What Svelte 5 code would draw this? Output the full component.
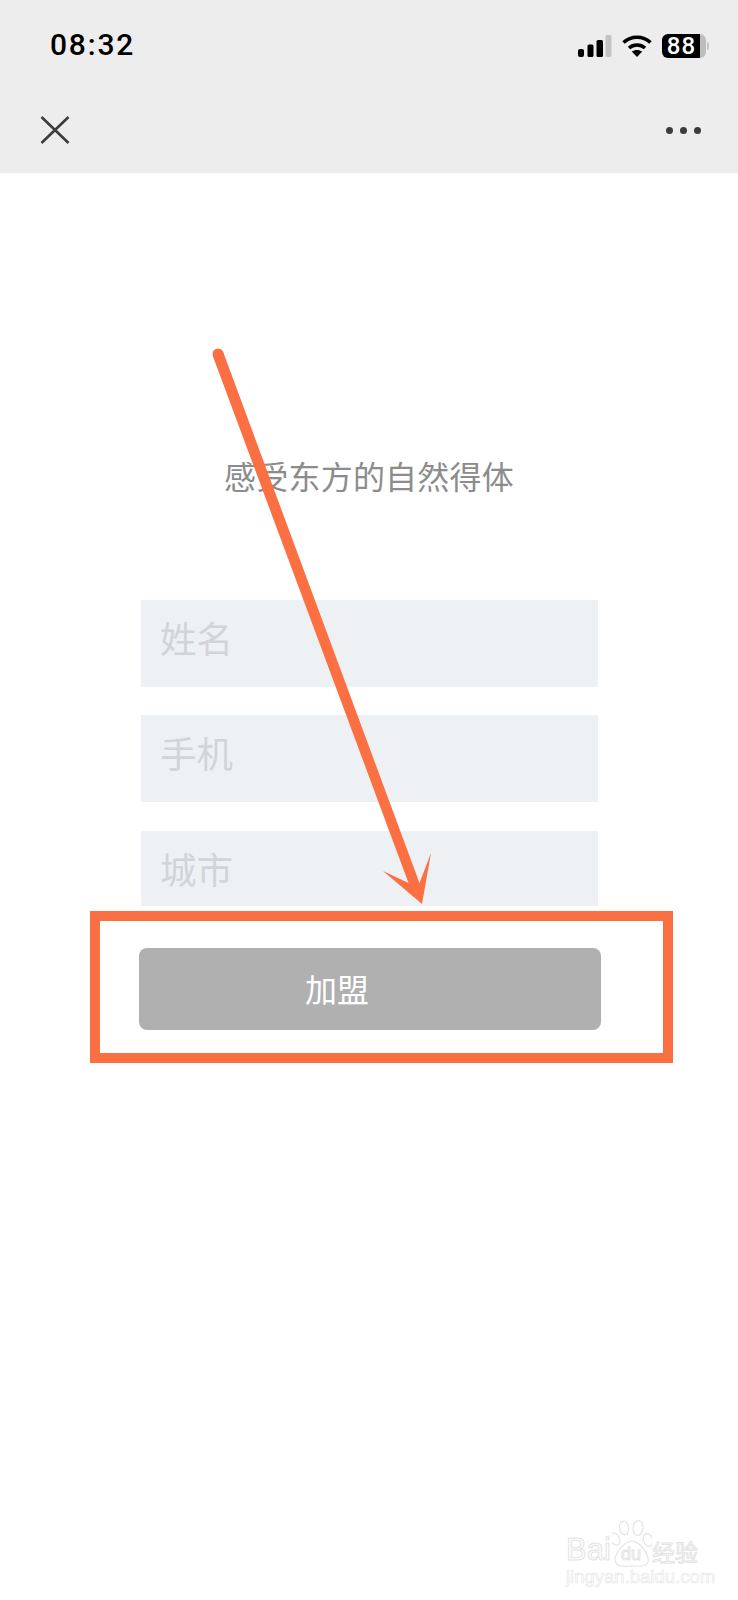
<script>
  const fields = [
    { label: "姓名", cls: "tall" },
    { label: "手机", cls: "tall" },
    { label: "城市", cls: "short" },
  ];
</script>

<div class="page">
  <header class="top">
    <div class="status">
      <span class="time">08:32</span>
      <div class="status-icons">
        <svg class="signal" width="34" height="22" viewBox="0 0 34 22">
          <rect x="0" y="14" width="6" height="8" rx="2" fill="#000" />
          <rect x="9.5" y="9.5" width="6" height="12.5" rx="1.5" fill="#000" />
          <rect x="18.5" y="5" width="6.5" height="17" rx="1.5" fill="#000" />
          <rect x="27.5" y="0" width="6" height="22" rx="1.5" fill="#c4c4c4" />
        </svg>
        <svg class="wifi" width="30" height="22" viewBox="0 0 30 22">
          <path d="M1.5 7.5C9 .5 21 .5 28.5 7.5" fill="none" stroke="#000" stroke-width="3.6" />
          <path d="M7 13C11.5 9 18.5 9 23 13" fill="none" stroke="#000" stroke-width="3.6" />
          <path d="M15 22L9.8 16.6C12.8 14.4 17.2 14.4 20.2 16.6Z" fill="#000" />
        </svg>
        <div class="battery">
          <div class="cell"><span>88</span></div>
          <div class="nub"></div>
        </div>
      </div>
    </div>
    <nav class="bar">
      <svg width="30" height="28" viewBox="0 0 30 28">
        <path d="M1.5 1L28.5 27M28.5 1L1.5 27" fill="none" stroke="#3c3c3c" stroke-width="2.6" />
      </svg>
      <div class="dots"><i></i><i></i><i></i></div>
    </nav>
  </header>

  <main class="content">
    <h1 class="title">感受东方的自然得体</h1>
    <div class="form">
      {#each fields as field}
        <div class="field {field.cls}"><span>{field.label}</span></div>
      {/each}
    </div>
    <div class="highlight">
      <button class="join" type="button">加盟</button>
    </div>
  </main>

  <!-- annotation arrow drawn over the form -->
  <svg class="arrow" width="738" height="1600" viewBox="0 0 738 1600">
    <circle cx="218" cy="354" r="5.5" fill="#fb7043" />
    <path d="M212.8 355.9L223.2 352.1L419.5 883L431 853L422 904L383 871L408.5 883Z" fill="#fb7043" />
  </svg>

  <div class="watermark">
    <div class="logo">
      <span class="bai">Bai</span>
      <svg class="paw" width="40" height="52" viewBox="0 0 40 52" fill="none" stroke="#e4e4e4" stroke-width="1.2">
        <ellipse cx="12" cy="9" rx="4.5" ry="7" transform="rotate(-8 12 9)" />
        <ellipse cx="26" cy="9" rx="5" ry="7.5" transform="rotate(8 26 9)" />
        <ellipse cx="3" cy="20" rx="4.5" ry="6.5" transform="rotate(-30 3 20)" />
        <ellipse cx="36" cy="21" rx="4.5" ry="6.5" transform="rotate(-20 36 21)" />
        <path d="M20 22C13 22 4 33 3 40C3 47 8 48 20 47C32 48 38 46 36 39C35 33 27 22 20 22Z" />
      </svg>
      <span class="du">du</span>
      <span class="jy">经验</span>
    </div>
    <div class="url">jingyan.baidu.com</div>
  </div>
</div>

<style>
  :global(body) {
    background: #fff;
  }
  .page {
    position: relative;
    width: 738px;
    height: 1600px;
    overflow: hidden;
    background: #fff;
    font-family: "Noto Sans CJK SC", "Noto Sans", sans-serif;
  }

  .top {
    height: 173px;
    background: #ededed;
  }
  .status {
    height: 90px;
    box-sizing: border-box;
    padding: 34px 29px 0 50px;
    display: flex;
    justify-content: space-between;
    align-items: flex-start;
  }
  .time {
    font-family: Roboto, Inter, sans-serif;
    font-size: 30px;
    line-height: 22px;
    font-weight: 500;
    letter-spacing: 1.8px;
    color: #000;
  }
  .status-icons {
    display: flex;
    align-items: center;
    gap: 10px;
  }
  .battery {
    display: flex;
    align-items: center;
    gap: 1px;
  }
  .cell {
    width: 44px;
    height: 24px;
    box-sizing: border-box;
    padding-right: 5px;
    border-radius: 6px;
    background: linear-gradient(to right, #000 38px, #bdbdbd 38px);
    display: flex;
    align-items: center;
    justify-content: center;
  }
  .cell span {
    font-family: Roboto, Inter, sans-serif;
    font-size: 24px;
    font-weight: 500;
    line-height: 24px;
    letter-spacing: 1px;
    color: #fff;
  }
  .nub {
    width: 2px;
    height: 8px;
    border-radius: 0 2px 2px 0;
    background: #c4c4c4;
  }

  .bar {
    height: 83px;
    box-sizing: border-box;
    padding: 26px 37px 0 40px;
    display: flex;
    justify-content: space-between;
    align-items: flex-start;
  }
  .dots {
    display: flex;
    gap: 7px;
    padding-top: 11px;
  }
  .dots i {
    width: 7px;
    height: 7px;
    border-radius: 50%;
    background: #3c3c3c;
  }

  .content {
    display: flex;
    flex-direction: column;
    align-items: flex-start;
  }
  .title {
    width: 100%;
    margin: 276px 0 0;
    text-align: center;
    font-size: 32px;
    line-height: 52px;
    letter-spacing: 0.2px;
    font-weight: 400;
    color: #8c8c8c;
  }
  .form {
    margin: 99px 0 0 141px;
    width: 457px;
    display: flex;
    flex-direction: column;
    gap: 28px;
  }
  .field {
    box-sizing: border-box;
    padding-left: 19px;
    background: #eef1f4;
    font-size: 36.5px;
    font-weight: 400;
    color: #d2d4d8;
    display: flex;
    align-items: center;
  }
  .field.tall {
    height: 87px;
    padding-bottom: 12px;
  }
  .field.tall + .field.short {
    margin-top: 1px;
  }
  .field.short {
    height: 75px;
    padding-bottom: 0;
  }

  .highlight {
    box-sizing: border-box;
    width: 583px;
    height: 152px;
    margin: 5px 0 0 90px;
    padding: 27px 62px 23px 39px;
    border: 10px solid #fb7043;
  }
  .join {
    display: block;
    width: 100%;
    height: 100%;
    box-sizing: border-box;
    padding: 0 66px 2px 0;
    border: none;
    border-radius: 8px;
    background: #b0b0b0;
    color: #fff;
    font-family: inherit;
    font-size: 32px;
    font-weight: 400;
  }

  .arrow {
    position: absolute;
    top: 0;
    left: 0;
    pointer-events: none;
  }

  .watermark {
    position: absolute;
    left: 566px;
    top: 1520px;
    width: 136px;
  }
  .logo {
    position: relative;
    height: 48px;
  }
  .bai,
  .du,
  .jy {
    position: absolute;
    color: transparent;
    -webkit-text-stroke: 1px #e4e4e4;
    font-family: "Liberation Sans", sans-serif;
  }
  .bai {
    left: 0;
    top: 15px;
    font-size: 31px;
    line-height: 30px;
  }
  .paw {
    position: absolute;
    left: 46px;
    top: -1px;
  }
  .du {
    left: 55px;
    top: 25px;
    font-size: 18px;
    line-height: 18px;
  }
  .jy {
    left: 86px;
    top: 17px;
    font-size: 23px;
    line-height: 28px;
    font-family: "Noto Sans CJK SC", sans-serif;
  }
  .url {
    font-family: "Liberation Sans", sans-serif;
    font-size: 18.5px;
    line-height: 18px;
    color: transparent;
    -webkit-text-stroke: 0.7px #e8e8e8;
    white-space: nowrap;
  }
</style>
